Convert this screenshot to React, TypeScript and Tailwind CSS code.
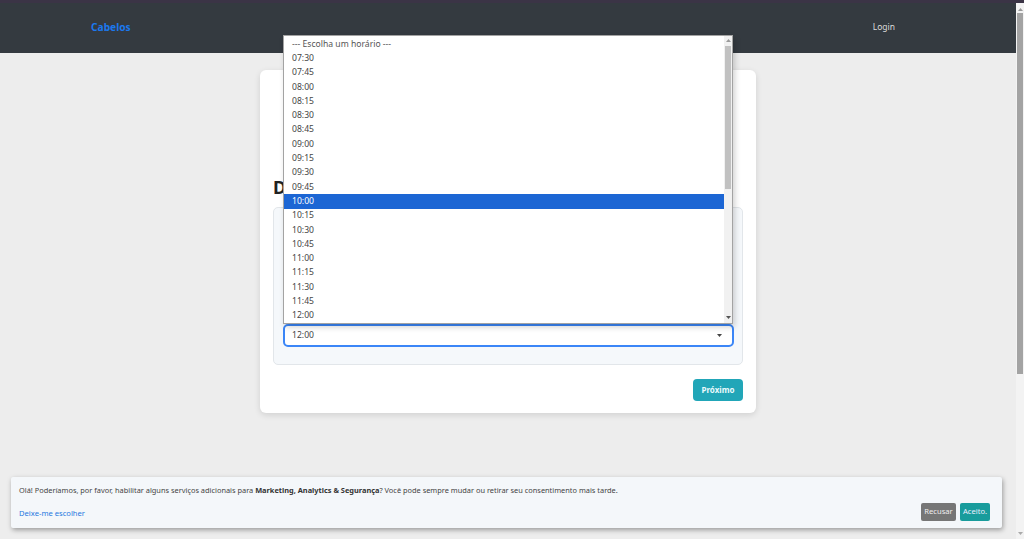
import React from 'react';

const horarios = [
  '07:30', '07:45', '08:00', '08:15', '08:30', '08:45', '09:00', '09:15', '09:30', '09:45',
  '10:00', '10:15', '10:30', '10:45', '11:00', '11:15', '11:30', '11:45', '12:00',
];

const font = { fontFamily: '"Noto Sans", "Open Sans", sans-serif' };

const Triangle: React.FC<{ up?: boolean; className?: string }> = ({ up, className }) => (
  <svg width="5" height="3" viewBox="0 0 5 3" className={className}>
    <path d={up ? 'M0 3 L2.5 0 L5 3 Z' : 'M0 0 L5 0 L2.5 3 Z'} fill="currentColor" />
  </svg>
);

// popup list of the open select
const HorarioList: React.FC = () => (
  <div className="absolute left-[283px] top-[35px] w-[450px] h-[289px] bg-white border border-[#a3a3a3] shadow-[2px_3px_6px_rgba(0,0,0,0.18)] flex">
    <div className="flex-1 flex flex-col pt-[1px]">
      <div className="h-[14.3px] pl-[8px] flex items-center text-[8.6px] text-[#555]">--- Escolha um horário ---</div>
      {horarios.map((h) => (
        <div
          key={h}
          className={`h-[14.3px] pl-[8px] flex items-center text-[8.6px] ${
            h === '10:00' ? 'bg-[#1c66d4] text-white' : 'text-[#444]'
          }`}
        >
          {h}
        </div>
      ))}
    </div>
    <div className="w-[8px] bg-[#f1f1f1] flex flex-col items-center">
      <Triangle up className="text-[#9a9a9a] mt-[3px]" />
      <div className="w-[6px] h-[143px] bg-[#c1c1c1] mt-[4px]" />
      <div className="flex-1" />
      <Triangle className="text-[#555] mb-[4px]" />
    </div>
  </div>
);

const CookieNotice: React.FC = () => (
  <div className="absolute left-[11px] top-[477px] w-[991px] h-[51px] bg-[#f4f7fa] rounded-[2px] shadow-[1px_2px_5px_rgba(0,0,0,0.35)] px-[8px] pt-[7px]">
    <p className="text-[7.4px] text-[#444] leading-[12px]">
      Olá! Poderíamos, por favor, habilitar alguns serviços adicionais para{' '}
      <strong className="font-bold text-[#333]">Marketing, Analytics &amp; Segurança</strong>? Você pode sempre mudar ou
      retirar seu consentimento mais tarde.
    </p>
    <div className="flex items-center justify-between mt-[7px]">
      <a className="text-[7.6px] text-[#1f78e0] mt-[3px]">Deixe-me escolher</a>
      <div className="flex gap-[4px] mr-[4px]">
        <button className="h-[18px] w-[35px] rounded-[2px] bg-[#767676] text-[7.6px] text-[#eee]">Recusar</button>
        <button className="h-[18px] w-[30px] rounded-[2px] bg-[#189c9c] text-[7.6px] text-[#eef]">Aceito.</button>
      </div>
    </div>
  </div>
);

export default function App() {
  return (
    <div className="relative w-[1024px] h-[539px] overflow-hidden bg-[#ededed]" style={font}>
      <div className="h-[3px] bg-[#3b3446]" />
      <div className="flex h-[536px]">
        <div className="w-[1016px] flex flex-col">
          <nav className="h-[50px] bg-[#343a40] flex items-center justify-between pl-[91px] pr-[121px]">
            <span className="text-[10.2px] font-bold text-[#1b78ee]">Cabelos</span>
            <span className="text-[8.5px] text-[#dcdcdc] -mt-[2px]">Login</span>
          </nav>

          <div className="ml-[260px] mt-[17px] w-[496px] h-[343px] bg-white rounded-[6px] shadow-[0_2px_6px_rgba(0,0,0,0.12)] px-[13px] flex flex-col">
            <div className="h-[104px]" />
            <h2 className="h-[26px] text-[18px] font-bold text-[#222] leading-[26px]">Data e horário</h2>
            <div className="mt-[7px] w-[470px] h-[158px] bg-[#f5f8fb] border border-[#e2e6ea] rounded-[5px] px-[9px] pb-[17px] flex flex-col justify-end">
              <div className="h-[23px] w-[451px] bg-white border-2 border-[#3b86f7] rounded-[5px] flex items-center justify-between pl-[7px] pr-[10px]">
                <span className="text-[8.6px] text-[#444]">12:00</span>
                <Triangle className="text-[#444]" />
              </div>
            </div>
            <div className="flex justify-end mt-[14px]">
              <button className="w-[50px] h-[22px] rounded-[4px] bg-[#21a6b8] text-[8px] font-bold text-[#eafafc]">
                Próximo
              </button>
            </div>
          </div>
        </div>

        {/* page scrollbar */}
        <div className="w-[8px] bg-[#f3f3f3] flex flex-col items-center">
          <Triangle up className="text-[#999] mt-[5px]" />
          <div className="w-[6px] h-[361px] bg-[#a3a3a3] mt-[2px]" />
          <div className="flex-1" />
          <Triangle className="text-[#aaa] mb-[4px]" />
        </div>
      </div>

      <HorarioList />
      <CookieNotice />
    </div>
  );
}
